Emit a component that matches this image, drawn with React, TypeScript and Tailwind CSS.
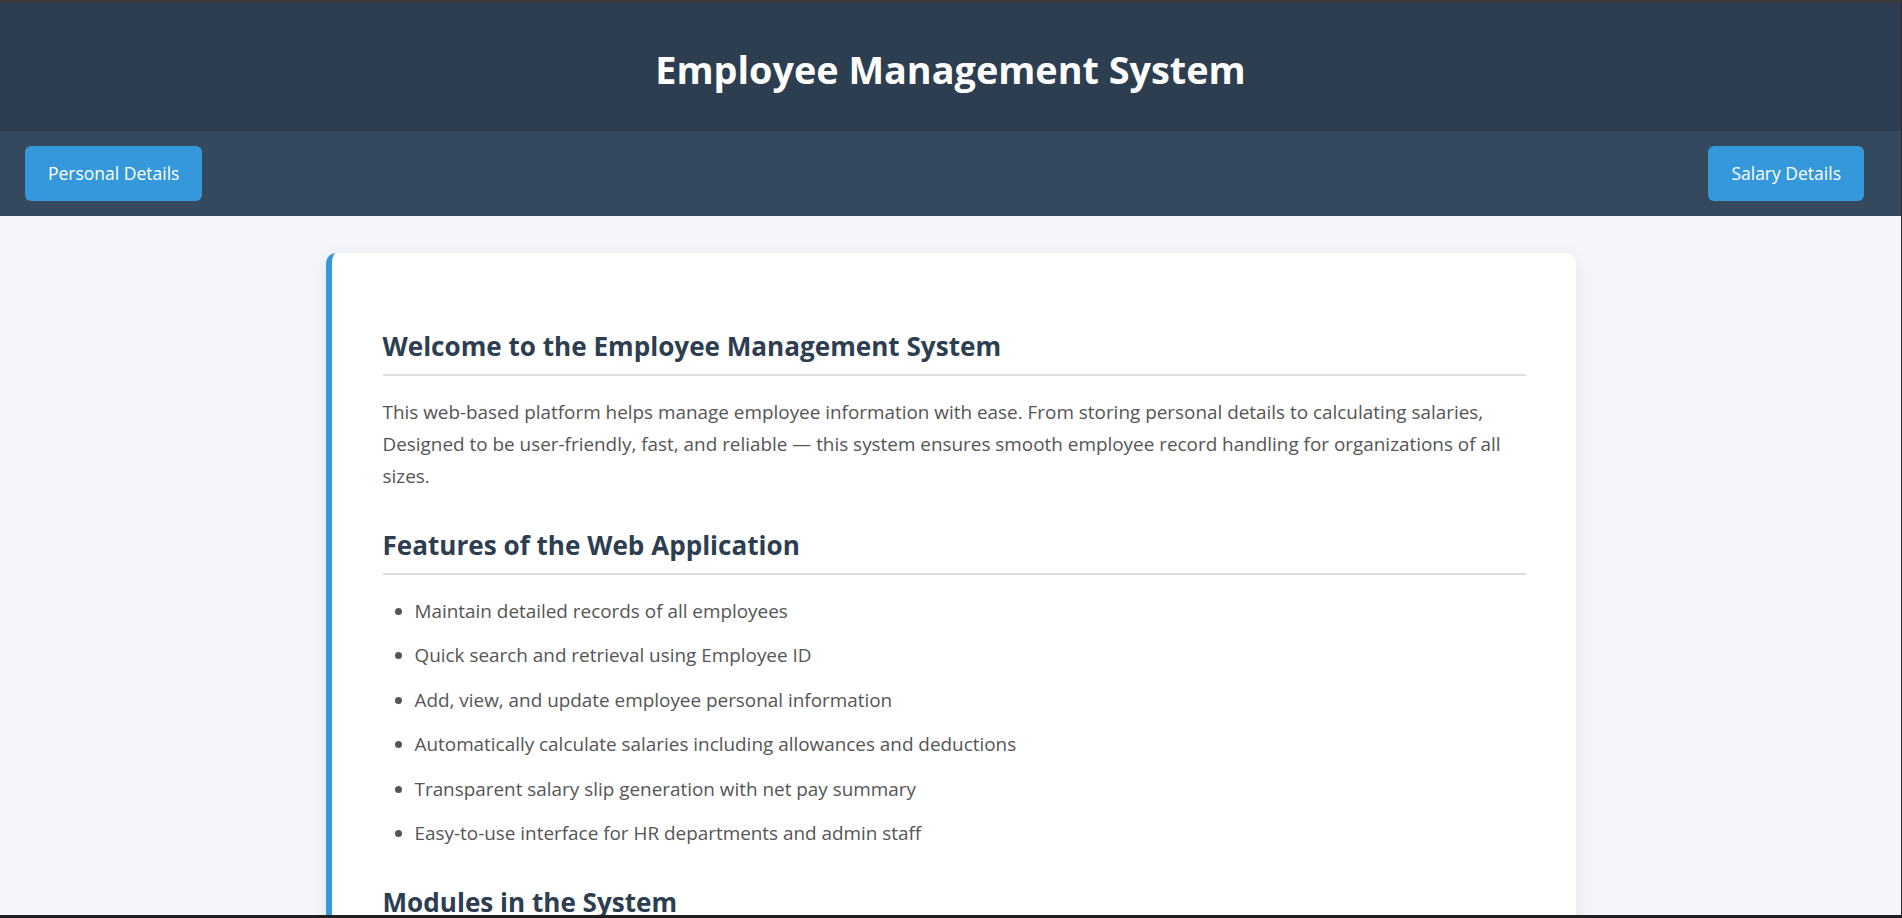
import React from "react";

const features = [
  "Maintain detailed records of all employees",
  "Quick search and retrieval using Employee ID",
  "Add, view, and update employee personal information",
  "Automatically calculate salaries including allowances and deductions",
  "Transparent salary slip generation with net pay summary",
  "Easy-to-use interface for HR departments and admin staff",
];

function SectionTitle({ children }: { children: React.ReactNode }) {
  return (
    <h2 className="mt-[37px] mb-[20px] border-b-2 border-[#dddddd] pb-[11px] text-[26.1px] font-bold leading-[32.8px] text-[#2c3e50] first:mt-[25px]">
      {children}
    </h2>
  );
}

export default function App() {
  return (
    <div className="flex h-[918px] flex-col overflow-hidden border-t-[3px] border-b-[3px] border-r border-t-[#3b3b3b] border-b-[#1f1f1f] border-r-[#2a2a2a] font-['Open_Sans','Segoe_UI',sans-serif]">
      <div className="flex-1 overflow-hidden bg-[#f4f6f9]">
        {/* Header */}
        <header className="flex h-[128px] items-center justify-center bg-[#2c3e50] pt-[5px]">
          <h1 className="text-[37.8px] font-bold leading-none text-white">Employee Management System</h1>
        </header>

        {/* Nav */}
        <nav className="flex h-[85px] items-center justify-between bg-[#34495e] pl-[25px] pr-[37px]">
          <button className="h-[55px] rounded-[6px] bg-[#3498db] px-[23px] text-[17.5px] text-white">
            Personal Details
          </button>
          <button className="h-[55px] rounded-[6px] bg-[#3498db] px-[23px] text-[17.5px] text-white">
            Salary Details
          </button>
        </nav>

        {/* Content card */}
        <main className="mx-auto mt-[37px] w-[1250px] rounded-[10px] border-l-[6px] border-[#3498db] bg-white pt-[52px] pr-[50px] pb-[50px] pl-[51px] shadow-[0_4px_20px_rgba(0,0,0,0.08)]">
          <SectionTitle>Welcome to the Employee Management System</SectionTitle>
          <p className="mb-[10px] text-[18.9px] leading-[32px] text-[#555555]">
            This web-based platform helps manage employee information with ease. From storing personal details to
            calculating salaries, Designed to be user-friendly, fast, and reliable — this system ensures smooth employee
            record handling for organizations of all sizes.
          </p>

          <SectionTitle>Features of the Web Application</SectionTitle>
          <ul className="mb-[10px] list-disc pl-[32px] text-[18.9px] leading-[32px] text-[#555555]">
            {features.map((f) => (
              <li key={f} className="mb-[12.5px] last:mb-0">
                {f}
              </li>
            ))}
          </ul>

          <SectionTitle>Modules in the System</SectionTitle>
        </main>
      </div>
    </div>
  );
}
